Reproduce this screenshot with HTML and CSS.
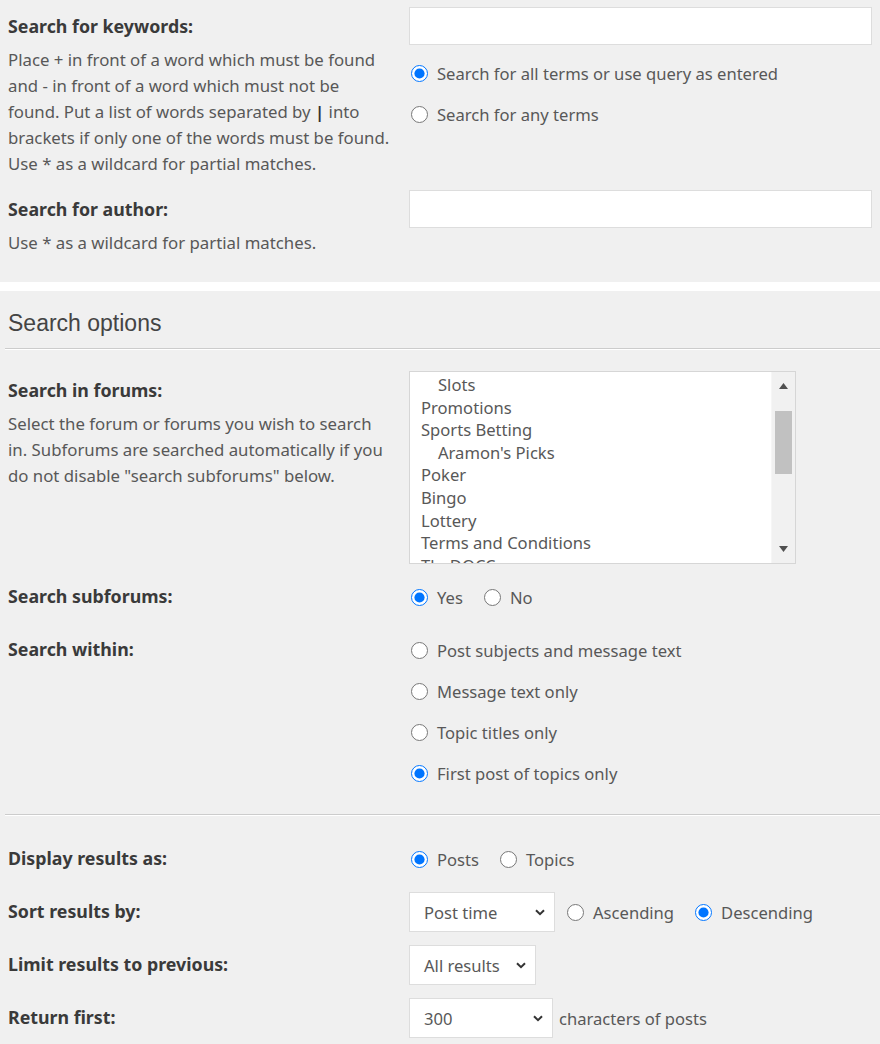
FILE: index.html
```html
<!DOCTYPE html>
<html>
<head>
<meta charset="utf-8">
<title>Search</title>
<link rel="stylesheet" href="styles.css">
</head>
<body>
<div class="panel panel-top">
  <dl class="row">
    <dt>
      <span class="lbl">Search for keywords:</span>
      <span class="desc">Place + in front of a word which must be found<br>and - in front of a word which must not be<br>found. Put a list of words separated by <b>|</b> into<br>brackets if only one of the words must be found.<br>Use * as a wildcard for partial matches.</span>
    </dt>
    <dd>
      <div class="input"></div>
      <div class="radio-list after-input">
        <label class="opt"><input type="radio" name="terms" checked><span>Search for all terms or use query as entered</span></label>
        <label class="opt"><input type="radio" name="terms"><span>Search for any terms</span></label>
      </div>
    </dd>
  </dl>
  <dl class="row">
    <dt>
      <span class="lbl">Search for author:</span>
      <span class="desc">Use * as a wildcard for partial matches.</span>
    </dt>
    <dd>
      <div class="input"></div>
    </dd>
  </dl>
</div>

<div class="panel panel-opts">
  <h3 class="heading">Search options</h3>
  <dl class="row">
    <dt>
      <span class="lbl">Search in forums:</span>
      <span class="desc">Select the forum or forums you wish to search<br>in. Subforums are searched automatically if you<br>do not disable "search subforums" below.</span>
    </dt>
    <dd>
      <div class="listbox">
        <ul class="list">
          <li class="sub">Slots</li>
          <li>Promotions</li>
          <li>Sports Betting</li>
          <li class="sub">Aramon's Picks</li>
          <li>Poker</li>
          <li>Bingo</li>
          <li>Lottery</li>
          <li>Terms and Conditions</li>
          <li>TheDOCC</li>
        </ul>
        <div class="scrollbar">
          <div class="sb-btn"><svg width="9" height="6" viewBox="0 0 9 6"><polygon points="0,6 4.5,0 9,6" fill="#505050"/></svg></div>
          <div class="sb-track"><div class="sb-thumb"></div></div>
          <div class="sb-btn"><svg width="9" height="6" viewBox="0 0 9 6"><polygon points="0,0 4.5,6 9,0" fill="#505050"/></svg></div>
        </div>
      </div>
    </dd>
  </dl>
  <dl class="row">
    <dt><span class="lbl">Search subforums:</span></dt>
    <dd>
      <div class="inline">
        <label class="opt"><input type="radio" name="sf" checked><span>Yes</span></label>
        <label class="opt"><input type="radio" name="sf"><span>No</span></label>
      </div>
    </dd>
  </dl>
  <dl class="row">
    <dt><span class="lbl">Search within:</span></dt>
    <dd>
      <div class="radio-list">
        <label class="opt"><input type="radio" name="sw"><span>Post subjects and message text</span></label>
        <label class="opt"><input type="radio" name="sw"><span>Message text only</span></label>
        <label class="opt"><input type="radio" name="sw"><span>Topic titles only</span></label>
        <label class="opt"><input type="radio" name="sw" checked><span>First post of topics only</span></label>
      </div>
    </dd>
  </dl>
  <div class="sep"></div>
  <dl class="row">
    <dt><span class="lbl">Display results as:</span></dt>
    <dd>
      <div class="inline">
        <label class="opt"><input type="radio" name="dr" checked><span>Posts</span></label>
        <label class="opt"><input type="radio" name="dr"><span>Topics</span></label>
      </div>
    </dd>
  </dl>
  <dl class="row">
    <dt><span class="lbl">Sort results by:</span></dt>
    <dd>
      <div class="inline">
        <div class="select w-sort"><span>Post time</span><svg class="chev" width="10" height="7" viewBox="0 0 10 7"><polyline points="1,1.2 5,5.2 9,1.2" fill="none" stroke="#333" stroke-width="2"/></svg></div>
        <label class="opt"><input type="radio" name="sd"><span>Ascending</span></label>
        <label class="opt"><input type="radio" name="sd" checked><span>Descending</span></label>
      </div>
    </dd>
  </dl>
  <dl class="row">
    <dt><span class="lbl">Limit results to previous:</span></dt>
    <dd>
      <div class="inline">
        <div class="select w-limit"><span>All results</span><svg class="chev" width="10" height="7" viewBox="0 0 10 7"><polyline points="1,1.2 5,5.2 9,1.2" fill="none" stroke="#333" stroke-width="2"/></svg></div>
      </div>
    </dd>
  </dl>
  <dl class="row">
    <dt><span class="lbl">Return first:</span></dt>
    <dd>
      <div class="inline">
        <div class="select w-return"><span>300</span><svg class="chev" width="10" height="7" viewBox="0 0 10 7"><polyline points="1,1.2 5,5.2 9,1.2" fill="none" stroke="#333" stroke-width="2"/></svg></div>
        <span class="after-text">characters of posts</span>
      </div>
    </dd>
  </dl>
</div>
</body>
</html>
```

FILE: styles.css
```css
html, body {
  margin: 0;
  padding: 0;
  background: #ffffff;
}

body {
  font-family: "Noto Sans", "Open Sans", sans-serif;
  font-size: 16.6px;
  color: #585858;
}

.panel {
  background: #f0f0f0;
  padding-left: 5px;
}

.panel-top {
  padding-bottom: 20px;
}

.panel-opts {
  margin-top: 9px;
  padding-top: 16px;
  padding-bottom: 10px;
}

.heading {
  margin: 0 0 15px 0;
  padding: 0 0 9px 3px;
  font-family: "Liberation Sans", Arial, sans-serif;
  font-weight: normal;
  font-size: 23px;
  line-height: 32px;
  color: #444444;
  border-bottom: 1px solid #cccccc;
  box-shadow: 0 1px 0 #ffffff;
}

.row {
  display: grid;
  grid-template-columns: 401px 1fr;
  margin: 0;
  padding: 7px 8px 6px 3px;
}

.row dt,
.row dd {
  margin: 0;
}

.lbl {
  display: block;
  line-height: 39px;
  font-size: 17.8px;
  font-weight: bold;
  color: #3a3a3a;
  white-space: nowrap;
}

.desc {
  display: block;
  margin-top: 1px;
  font-size: 16.8px;
  line-height: 26px;
  white-space: nowrap;
}

.desc b {
  color: #333333;
}

.input {
  height: 38px;
  box-sizing: border-box;
  background: #ffffff;
  border: 1px solid #dddddd;
}

.radio-list {
  display: flex;
  flex-direction: column;
}

.radio-list.after-input {
  margin-top: 8px;
}

.opt {
  display: flex;
  align-items: center;
  gap: 9px;
  height: 41px;
  white-space: nowrap;
}

.opt input {
  width: 17px;
  height: 17px;
  margin: 0 0 0 2px;
  flex: none;
}

.inline {
  display: flex;
  align-items: center;
  min-height: 40px;
}

.inline .opt {
  height: 40px;
}

.inline .opt + .opt {
  margin-left: 19px;
}

.select + .opt {
  margin-left: 10px;
}

.select {
  display: flex;
  align-items: center;
  justify-content: space-between;
  height: 40px;
  box-sizing: border-box;
  background: #ffffff;
  border: 1px solid #dddddd;
  padding: 0 9px 0 14px;
  color: #585858;
  white-space: nowrap;
}

.w-sort { width: 146px; }
.w-limit { width: 127px; }
.w-return { width: 144px; }

.chev {
  flex: none;
}

.after-text {
  margin-left: 6px;
  white-space: nowrap;
}

.listbox {
  display: flex;
  width: 387px;
  height: 193px;
  box-sizing: border-box;
  background: #ffffff;
  border: 1px solid #d6d6d6;
  overflow: hidden;
}

.list {
  flex: 1;
  list-style: none;
  margin: 0;
  padding: 2px 0 0 11px;
  overflow: hidden;
  color: #585858;
}

.list li {
  height: 22.6px;
  line-height: 22.6px;
  white-space: nowrap;
}

.list li.sub {
  padding-left: 17px;
}

.scrollbar {
  width: 23px;
  flex: none;
  display: flex;
  flex-direction: column;
  background: #f1f1f1;
  border-left: 1px solid #f6f6f6;
}

.sb-btn {
  height: 28px;
  display: flex;
  align-items: center;
  justify-content: center;
  flex: none;
}

.sb-track {
  flex: 1;
  padding: 11px 3px 0 3px;
}

.sb-thumb {
  height: 63px;
  background: #c1c1c1;
}

.sep {
  margin: 14px 0 17px 0;
  border-top: 1px solid #cccccc;
  box-shadow: 0 1px 0 #ffffff;
}
```
